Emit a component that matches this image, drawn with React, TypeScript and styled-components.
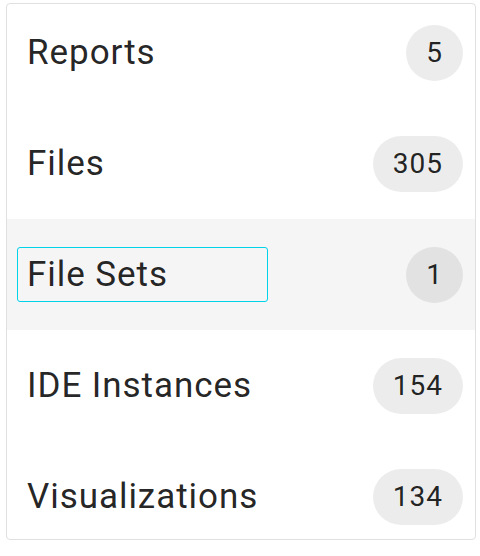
import React from 'react';
import styled, { createGlobalStyle } from 'styled-components';

const GlobalStyle = createGlobalStyle`
  html, body {
    margin: 0;
    padding: 0;
    background: #ffffff;
  }
  body {
    font-family: Roboto, "Liberation Sans", Arial, sans-serif;
  }
`;

const Card = styled.div`
  box-sizing: border-box;
  width: 470px;
  height: 537px;
  margin: 3px 0 0 6px;
  border: 1px solid #e0e0e0;
  border-radius: 4px;
  background: #ffffff;
  overflow: hidden;
`;

const List = styled.ul`
  list-style: none;
  margin: -7px 0 0;
  padding: 0;
`;

const Row = styled.li<{ $selected?: boolean }>`
  box-sizing: border-box;
  height: 111px;
  display: flex;
  align-items: center;
  justify-content: space-between;
  padding: 0 12px 0 10px;
  background: ${({ $selected }) => ($selected ? '#f5f5f5' : 'transparent')};
`;

const Label = styled.span<{ $focused?: boolean }>`
  box-sizing: border-box;
  width: 251px;
  height: 55px;
  display: flex;
  align-items: center;
  padding: 0 9px;
  border: 1px solid ${({ $focused }) => ($focused ? '#00d2ea' : 'transparent')};
  border-radius: 3px;
  font-size: 35px;
  letter-spacing: 0.95px;
  color: rgba(0, 0, 0, 0.87);
  white-space: nowrap;
`;

const Count = styled.span`
  box-sizing: border-box;
  height: 56px;
  min-width: 56px;
  padding: 0 20px;
  display: inline-flex;
  align-items: center;
  justify-content: center;
  border-radius: 28px;
  background: rgba(0, 0, 0, 0.075);
  font-size: 28px;
  letter-spacing: 1px;
  color: rgba(0, 0, 0, 0.87);
`;

const items = [
  { label: 'Reports', count: 5 },
  { label: 'Files', count: 305 },
  { label: 'File Sets', count: 1, selected: true },
  { label: 'IDE Instances', count: 154 },
  { label: 'Visualizations', count: 134 },
];

const App: React.FC = () => (
  <>
    <GlobalStyle />
    <Card>
      <List>
        {items.map((item) => (
          <Row key={item.label} $selected={item.selected}>
            <Label $focused={item.selected}>{item.label}</Label>
            <Count>{item.count}</Count>
          </Row>
        ))}
      </List>
    </Card>
  </>
);

export default App;
